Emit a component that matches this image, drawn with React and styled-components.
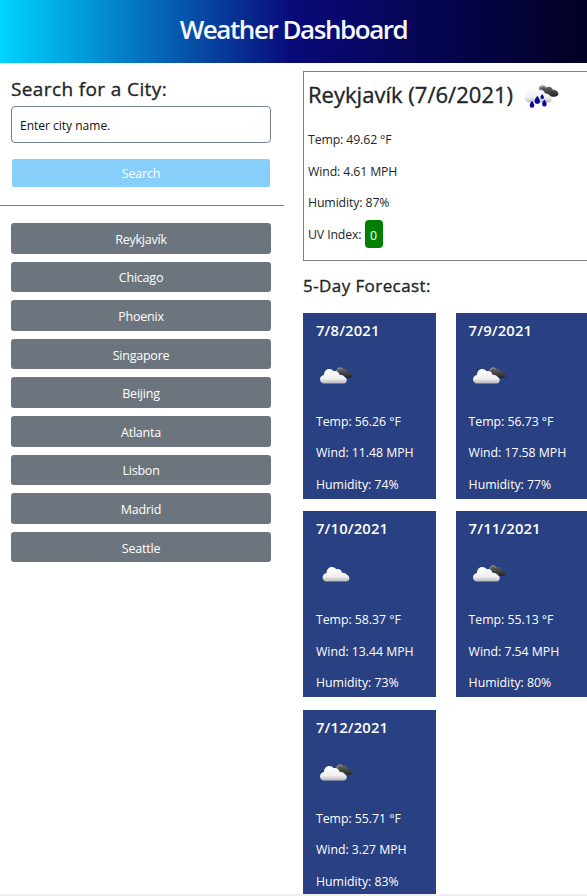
import React from "react";
import styled, { createGlobalStyle } from "styled-components";

const GlobalStyle = createGlobalStyle`
  *, *::before, *::after { box-sizing: border-box; }
  html, body { margin: 0; padding: 0; overflow: hidden; background: #fff; }
  body { font-family: "Open Sans", "Noto Sans", sans-serif; color: #212529; }
  h1, h2, h3, p { margin: 0; white-space: nowrap; }
`;

const Page = styled.div`
  width: 100%;
  height: 896px;
  overflow: hidden;
  display: flex;
  flex-direction: column;
`;

const Header = styled.header`
  flex: none;
  height: 63px;
  display: flex;
  justify-content: center;
  background: linear-gradient(to right, #00d4ff 0%, #090979 50%, #020024 100%);
`;

const Title = styled.h1`
  color: #f4f8ff;
  font-size: 26px;
  font-weight: 600;
  line-height: 58px;
  letter-spacing: -1.45px;
`;

const Columns = styled.main`
  flex: none;
  height: 831px;
  overflow: hidden;
  display: flex;
  gap: 19px;
`;

const Footer = styled.div`
  flex: none;
  height: 2px;
  background: #f0f0f0;
`;

const Sidebar = styled.aside`
  flex: none;
  width: 284px;
`;

const SearchForm = styled.form`
  height: 143px;
  padding: 11px 13px 0 11px;
  border-bottom: 1px solid #75808a;
  display: flex;
  flex-direction: column;
`;

const Heading = styled.h2`
  font-weight: 500;
  -webkit-text-stroke: 0.35px currentColor;
`;

const SearchLabel = styled(Heading)`
  font-size: 19px;
  line-height: 30px;
  height: 32px;
  letter-spacing: 0.38px;
`;

const CityInput = styled.input`
  width: 260px;
  height: 37px;
  padding: 1px 8px 0;
  border: 1px solid #708090;
  border-radius: 4px;
  outline: none;
  font: 400 12px "Open Sans", sans-serif;
  letter-spacing: 0px;
  color: #111;
  &::placeholder { color: #111; opacity: 1; }
`;

const Button = styled.button`
  display: block;
  padding: 1px 0 0;
  border: 0;
  color: #fff;
  font: 400 12.5px "Open Sans", sans-serif;
  letter-spacing: -0.22px;
`;

const SearchButton = styled(Button)`
  width: 258px;
  height: 28px;
  margin: 16px 0 0 1px;
  border-radius: 2px;
  background: #87cefa;
`;

const CityList = styled.nav`
  padding: 17px 13px 0 11px;
  display: grid;
  grid-auto-rows: 30.6px;
  gap: 8px;
`;

const CityButton = styled(Button)`
  width: 260px;
  padding-top: 2px;
  border-radius: 3.2px;
  background: #6c757d;
`;

const Results = styled.section`
  flex: none;
  width: 305px;
  padding-top: 8px;
`;

const Current = styled.article`
  height: 190px;
  padding: 0 4px;
  border: 1px solid #808080;
`;

const CurrentHeading = styled.div`
  height: 52px;
  display: flex;
  align-items: flex-start;
  gap: 10px;
`;

const CurrentTitle = styled(Heading)`
  width: 206px;
  font-size: 22px;
  line-height: 44px;
  letter-spacing: 0.02px;
`;

const Metric = styled.p`
  height: 31.5px;
  line-height: 31.5px;
  font-size: 12.3px;
  letter-spacing: ${(p) => (p.$light ? "-0.12px" : "-0.03px")};
`;

const UvBadge = styled.span`
  display: inline-block;
  position: relative;
  top: -1px;
  width: 18px;
  height: 28px;
  border-radius: 4px;
  background: #008000;
  color: #fff;
  text-align: center;
  line-height: 31px;
  vertical-align: middle;
`;

const ForecastTitle = styled(Heading)`
  height: 52px;
  line-height: 49px;
  font-size: 17px;
  letter-spacing: 0.42px;
`;

const Forecast = styled.div`
  display: grid;
  grid-template-columns: 133px 133px;
  grid-auto-rows: 186px;
  column-gap: 19.6px;
  row-gap: 12.4px;
`;

const DayCard = styled.article`
  padding: 0 13px;
  background: #294082;
  color: #fff;
  overflow: hidden;
`;

const DayTitle = styled.h3`
  height: 40px;
  line-height: 35px;
  font-size: 14.8px;
  font-weight: 600;
  letter-spacing: 0.15px;
`;

const DayIcon = styled.div`
  height: 52.8px;
  padding: 13px 0 0 3px;
`;

const Icon = styled.svg`
  display: block;
  width: 36px;
  height: 28px;
`;

const RainIcon = styled(Icon)`
  margin-top: 12px;
`;

const FRONT =
  "M6.2 17.6C3 17.6 1 15.8 1 13.4C1 11 2.7 9.3 4.9 9C4.9 5.7 7.2 3 10.2 3C12 3 13.6 3.8 14.6 5.2C17.8 4.5 20 6.2 20.4 8.8C23 8.6 25 9.8 26.3 11.6C28.7 12.7 28.2 17.6 24.7 17.6Z";
const BACK =
  "M17.2 6.4C16.8 3.4 18.4 1.2 21 1.3C22.8 1.3 23.8 2 24.5 2.8C26.8 2.4 28.6 3.8 29 5.4C31.4 6.2 33.3 8 34 10.1C32.4 12.4 30 12.1 27.2 12C25 9 22.8 8.6 20.4 8.6Z";

function Gradients({ id }) {
  return (
    <defs>
      <linearGradient id={id + "w"} x1="0" y1="0" x2="0" y2="1">
        <stop offset="0" stopColor="#fff" />
        <stop offset=".65" stopColor="#f0f0f0" />
        <stop offset="1" stopColor="#b5b5b5" />
      </linearGradient>
      <linearGradient id={id + "d"} x1="0" y1="0" x2="0" y2="1">
        <stop offset="0" stopColor="#686868" />
        <stop offset=".5" stopColor="#484848" />
        <stop offset="1" stopColor="#222" />
      </linearGradient>
    </defs>
  );
}

function BrokenClouds({ id }) {
  return (
    <Icon viewBox="0 0 36 28">
      <Gradients id={id} />
      <path d={BACK} fill={`url(#${id}d)`} />
      <path d="M18 5.4C17.9 3.3 19.2 2.1 21 2.1C22.3 2.1 23.4 2.8 23.8 3.8" fill="none" stroke="#969696" strokeWidth="1" />
      <path d={FRONT} fill={`url(#${id}w)`} />
    </Icon>
  );
}

function SingleCloud({ id }) {
  return (
    <Icon viewBox="0 0 36 28">
      <Gradients id={id} />
      <path transform="translate(2.6 0)" d={FRONT} fill={`url(#${id}w)`} />
    </Icon>
  );
}

function RainCloud({ id }) {
  return (
    <RainIcon viewBox="0 0 36 28">
      <Gradients id={id} />
      <path
        d="M14.6 5C15 2.6 17 1.2 19.2 1.6C20.6 1.7 21.5 2.4 22.2 3.4C24.8 1.9 28.2 3 28.8 5.7C32.2 5.5 35 8 34.3 10.4C33.8 13 28.5 13 25.8 12.3C22.5 12 20 9 18.4 8Z"
        fill={`url(#${id}d)`}
      />
      <path d="M15.6 5C16.2 3.1 17.5 2.3 19.2 2.5C20.2 2.6 20.9 3.1 21.5 3.9" fill="none" stroke="#999" strokeWidth="1.2" />
      <path
        d="M6.2 18.6C2.8 18.6 1 16.6 1 14C1 11.4 2.8 9.5 5.2 9.3C5 5.9 7.6 3.8 10.6 3.9C12.5 3.9 14 4.8 15 6.2C18.2 5.4 20.4 7 20.9 9.6C23.3 9.5 25.4 10.8 26.5 12.4C29 14 27.5 18.6 24.6 18.6Z"
        fill={`url(#${id}w)`}
        stroke="#e4e4e8"
        strokeWidth=".5"
      />
      {[[8, 18, 1], [13.3, 13.2, 1.15], [18.2, 10.8, 0.75], [20.4, 16.7, 1]].map(([x, y, s]) => (
        <path
          key={x}
          transform={`translate(${x} ${y}) scale(${s})`}
          d="M0 -1.2C.8 .4 2.3 1.4 2.3 3.2A2.3 2.5 0 0 1-2.3 3.2C-2.3 1.4-.8 .4 0 -1.2Z"
          fill="#07079a"
        />
      ))}
    </RainIcon>
  );
}

const cities = ["Reykjavík", "Chicago", "Phoenix", "Singapore", "Beijing", "Atlanta", "Lisbon", "Madrid", "Seattle"];

const days = [
  { date: "7/8/2021", temp: "56.26", wind: "11.48", humidity: 74, icon: BrokenClouds },
  { date: "7/9/2021", temp: "56.73", wind: "17.58", humidity: 77, icon: BrokenClouds },
  { date: "7/10/2021", temp: "58.37", wind: "13.44", humidity: 73, icon: SingleCloud },
  { date: "7/11/2021", temp: "55.13", wind: "7.54", humidity: 80, icon: BrokenClouds },
  { date: "7/12/2021", temp: "55.71", wind: "3.27", humidity: 83, icon: BrokenClouds },
];

export default function App() {
  return (
    <Page>
      <GlobalStyle />
      <Header>
        <Title>Weather Dashboard</Title>
      </Header>
      <Columns>
        <Sidebar>
          <SearchForm onSubmit={(e) => e.preventDefault()}>
            <SearchLabel>Search for a City:</SearchLabel>
            <CityInput placeholder="Enter city name." />
            <SearchButton type="submit">Search</SearchButton>
          </SearchForm>
          <CityList>
            {cities.map((city) => (
              <CityButton key={city} type="button">{city}</CityButton>
            ))}
          </CityList>
        </Sidebar>
        <Results>
          <Current>
            <CurrentHeading>
              <CurrentTitle>Reykjavík (7/6/2021)</CurrentTitle>
              <RainCloud id="now" />
            </CurrentHeading>
            <Metric $light>Temp: 49.62 °F</Metric>
            <Metric $light>Wind: 4.61 MPH</Metric>
            <Metric $light>Humidity: 87%</Metric>
            <Metric $light>
              UV Index: <UvBadge>0</UvBadge>
            </Metric>
          </Current>
          <ForecastTitle>5-Day Forecast:</ForecastTitle>
          <Forecast>
            {days.map(({ date, temp, wind, humidity, icon: WeatherIcon }, i) => (
              <DayCard key={date}>
                <DayTitle>{date}</DayTitle>
                <DayIcon>
                  <WeatherIcon id={"day" + i} />
                </DayIcon>
                <Metric>Temp: {temp} °F</Metric>
                <Metric>Wind: {wind} MPH</Metric>
                <Metric>Humidity: {humidity}%</Metric>
              </DayCard>
            ))}
          </Forecast>
        </Results>
      </Columns>
      <Footer />
    </Page>
  );
}
